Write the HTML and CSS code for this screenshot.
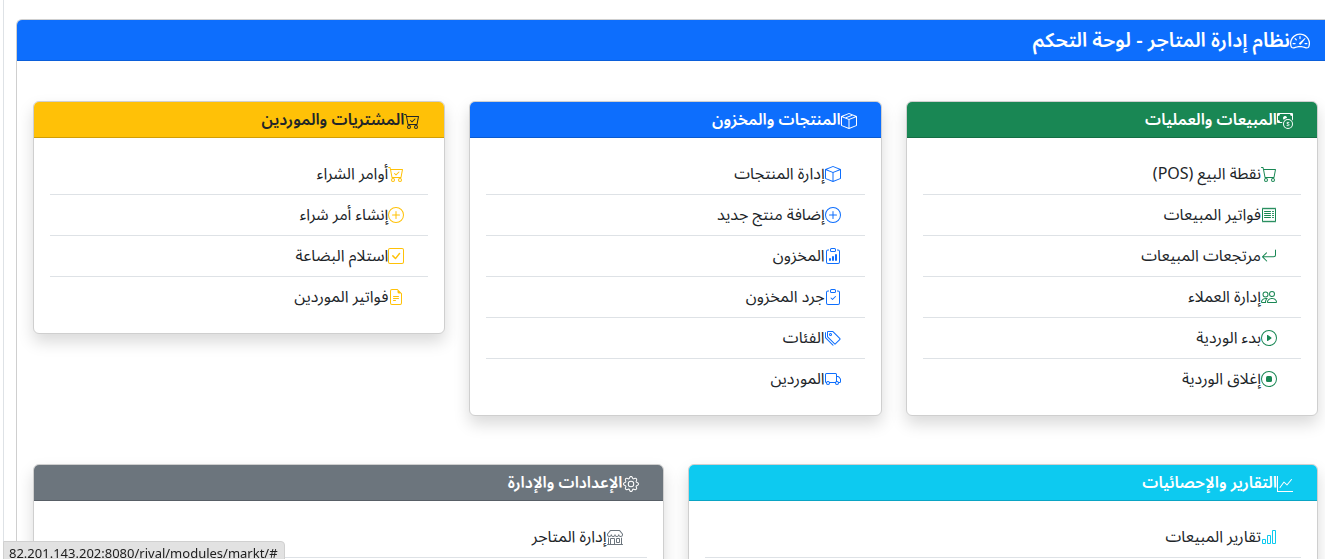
FILE: index.html
```html
<!DOCTYPE html>
<html lang="ar" dir="rtl">
<head>
  <meta charset="UTF-8" />
  <meta name="viewport" content="width=device-width, initial-scale=1.0" />
  <title>نظام إدارة المتاجر - لوحة التحكم</title>
  <link rel="stylesheet" href="styles.css">
</head>
<body>

  <!-- Icons -->
  <svg class="icon-sprite" aria-hidden="true">
    <symbol id="speedometer" viewBox="0 0 16 16">
      <path d="M8 4a.5.5 0 0 1 .5.5V6a.5.5 0 0 1-1 0V4.500A.5.5 0 0 1 8 4M3.732 5.732a.5.5 0 0 1 .707 0l.915.914a.5.5 0 1 1-.708.708l-.914-.915a.5.5 0 0 1 0-.707M2 10a.5.5 0 0 1 .5-.5h1.586a.5.5 0 0 1 0 1H2.500A.5.5 0 0 1 2 10m9.500 0a.5.5 0 0 1 .5-.5h1.500a.5.5 0 0 1 0 1H12a.5.5 0 0 1-.5-.5m.754-4.246a.389.389 0 0 0-.527-.02L7.547 9.310a.910.910 0 1 0 1.302 1.258l3.434-4.297a.389.389 0 0 0-.029-.518z"/>
      <path fill-rule="evenodd" d="M0 10a8 8 0 1 1 15.547 2.661c-.442 1.253-1.845 1.602-2.932 1.250C11.309 13.488 9.475 13 8 13c-1.474 0-3.310.488-4.615.911-1.087.352-2.490.003-2.932-1.250A8 8 0 0 1 0 10m8-7a7 7 0 0 0-6.603 9.329c.203.575.923.876 1.680.630C4.397 12.533 6.358 12 8 12s3.604.532 4.923.960c.757.245 1.477-.056 1.680-.631A7 7 0 0 0 8 3"/>
    </symbol>
    <symbol id="cash-coin" viewBox="0 0 16 16">
      <path fill-rule="evenodd" d="M11 15a4 4 0 1 0 0-8 4 4 0 0 0 0 8m5-4a5 5 0 1 1-10 0 5 5 0 0 1 10 0"/>
      <path d="M9.438 11.944c.047.596.518 1.060 1.363 1.116v.440h.375v-.443c.875-.061 1.386-.529 1.386-1.207 0-.618-.39-.936-1.090-1.100l-.296-.07v-1.200c.376.043.614.248.671.532h.658c-.047-.575-.54-1.024-1.329-1.073V8.500h-.375v.45c-.747.073-1.255.522-1.255 1.158 0 .562.378.920 1.007 1.066l.248.061v1.272c-.384-.058-.639-.27-.696-.563h-.668zm1.360-1.354c-.369-.085-.569-.26-.569-.522 0-.294.216-.514.572-.578v1.100zm.432.746c.449.104.655.272.655.569 0 .339-.257.571-.709.614v-1.195z"/>
      <path d="M1 0a1 1 0 0 0-1 1v8a1 1 0 0 0 1 1h4.083q.088-.517.258-1H3a2 2 0 0 0-2-2V3a2 2 0 0 0 2-2h10a2 2 0 0 0 2 2v3.528c.38.340.717.728 1 1.154V1a1 1 0 0 0-1-1z"/>
      <path d="M9.998 5.083 10 5a2 2 0 1 0-3.132 1.650 6 6 0 0 1 3.130-1.567"/>
    </symbol>
    <symbol id="cart" viewBox="0 0 16 16">
      <path d="M0 1.500A.5.5 0 0 1 .5 1H2a.5.5 0 0 1 .485.379L2.890 3H14.500a.5.5 0 0 1 .491.592l-1.500 8A.5.5 0 0 1 13 12H4a.5.5 0 0 1-.491-.408L2.010 3.607 1.610 2H.5a.5.5 0 0 1-.5-.5M3.102 4l1.313 7h8.170l1.313-7zM5 12a2 2 0 1 0 0 4 2 2 0 0 0 0-4m7 0a2 2 0 1 0 0 4 2 2 0 0 0 0-4m-7 1a1 1 0 1 1 0 2 1 1 0 0 1 0-2m7 0a1 1 0 1 1 0 2 1 1 0 0 1 0-2"/>
    </symbol>
    <symbol id="cart-check" viewBox="0 0 16 16">
      <path d="M11.354 6.354a.5.5 0 0 0-.708-.708L8 8.293 6.854 7.146a.5.5 0 1 0-.708.708l1.500 1.500a.5.5 0 0 0 .708 0z"/>
      <path d="M.5 1a.5.5 0 0 0 0 1h1.110l.401 1.607 1.498 7.985A.5.5 0 0 0 4 12h1a2 2 0 1 0 0 4 2 2 0 0 0 0-4h7a2 2 0 1 0 0 4 2 2 0 0 0 0-4h1a.5.5 0 0 0 .491-.408l1.500-8A.5.5 0 0 0 14.500 3H2.890l-.405-1.621A.5.5 0 0 0 2 1zm3.915 10L3.102 4h10.796l-1.313 7zM6 14a1 1 0 1 1-2 0 1 1 0 0 1 2 0m7 0a1 1 0 1 1-2 0 1 1 0 0 1 2 0"/>
    </symbol>
    <symbol id="receipt" viewBox="0 0 16 16">
      <path d="M1.920.506a.5.5 0 0 1 .434.140L3 1.293l.646-.647a.5.5 0 0 1 .708 0L5 1.293l.646-.647a.5.5 0 0 1 .708 0L7 1.293l.646-.647a.5.5 0 0 1 .708 0L9 1.293l.646-.647a.5.5 0 0 1 .708 0l.646.647.646-.647a.5.5 0 0 1 .708 0l.646.647.646-.647a.5.5 0 0 1 .801.130l.5 1A.5.5 0 0 1 15 2v12a.5.5 0 0 1-.053.224l-.5 1a.5.5 0 0 1-.8.130L13 14.707l-.646.647a.5.5 0 0 1-.708 0L11 14.707l-.646.647a.5.5 0 0 1-.708 0L9 14.707l-.646.647a.5.5 0 0 1-.708 0L7 14.707l-.646.647a.5.5 0 0 1-.708 0L5 14.707l-.646.647a.5.5 0 0 1-.708 0L3 14.707l-.646.647a.5.5 0 0 1-.801-.130l-.5-1A.5.5 0 0 1 1 14V2a.5.5 0 0 1 .053-.224l.5-1a.5.5 0 0 1 .367-.270m.217 1.338L2 2.118v11.764l.137.274.51-.510a.5.5 0 0 1 .707 0l.646.647.646-.646a.5.5 0 0 1 .708 0l.646.646.646-.646a.5.5 0 0 1 .708 0l.646.646.646-.646a.5.5 0 0 1 .708 0l.646.646.646-.646a.5.5 0 0 1 .708 0l.646.646.646-.646a.5.5 0 0 1 .708 0l.509.509.137-.274V2.118l-.137-.274-.51.510a.5.5 0 0 1-.707 0L12 1.707l-.646.647a.5.5 0 0 1-.708 0L10 1.707l-.646.647a.5.5 0 0 1-.708 0L8 1.707l-.646.647a.5.5 0 0 1-.708 0L6 1.707l-.646.647a.5.5 0 0 1-.708 0L4 1.707l-.646.647a.5.5 0 0 1-.708 0z"/>
      <path d="M3 4.500a.5.5 0 0 1 .5-.5h6a.5.5 0 1 1 0 1h-6a.5.5 0 0 1-.5-.5m0 2a.5.5 0 0 1 .5-.5h6a.5.5 0 1 1 0 1h-6a.5.5 0 0 1-.5-.5m0 2a.5.5 0 0 1 .5-.5h6a.5.5 0 1 1 0 1h-6a.5.5 0 0 1-.5-.5m0 2a.5.5 0 0 1 .5-.5h6a.5.5 0 0 1 0 1h-6a.5.5 0 0 1-.5-.5m8-6a.5.5 0 0 1 .5-.5h1a.5.5 0 0 1 0 1h-1a.5.5 0 0 1-.5-.5m0 2a.5.5 0 0 1 .5-.5h1a.5.5 0 0 1 0 1h-1a.5.5 0 0 1-.5-.5m0 2a.5.5 0 0 1 .5-.5h1a.5.5 0 0 1 0 1h-1a.5.5 0 0 1-.5-.5m0 2a.5.5 0 0 1 .5-.5h1a.5.5 0 0 1 0 1h-1a.5.5 0 0 1-.5-.5"/>
    </symbol>
    <symbol id="arrow-return" viewBox="0 0 16 16">
      <path fill-rule="evenodd" d="M14.500 1.500a.5.5 0 0 1 .5.5v4.800a2.500 2.500 0 0 1-2.500 2.500H2.707l3.347 3.346a.5.5 0 0 1-.708.708l-4.200-4.200a.5.5 0 0 1 0-.708l4-4a.5.5 0 1 1 .708.708L2.707 8.300H12.500A1.500 1.500 0 0 0 14 6.800V2a.5.5 0 0 1 .5-.5"/>
    </symbol>
    <symbol id="people" viewBox="0 0 16 16">
      <path d="M15 14s1 0 1-1-1-4-5-4-5 3-5 4 1 1 1 1zm-7.978-1L7 12.996c.001-.264.167-1.030.760-1.720C8.312 10.629 9.282 10 11 10c1.717 0 2.687.630 3.240 1.276.593.690.758 1.457.760 1.720l-.008.002-.014.002zM11 7a2 2 0 1 0 0-4 2 2 0 0 0 0 4m3-2a3 3 0 1 1-6 0 3 3 0 0 1 6 0M6.936 9.280a6 6 0 0 0-1.230-.247A7 7 0 0 0 5 9c-4 0-5 3-5 4q0 1 1 1h4.216A2.240 2.240 0 0 1 5 13c0-1.010.377-2.042 1.090-2.904.243-.294.526-.569.846-.816M4.920 10A5.500 5.500 0 0 0 4 13H1c0-.26.164-1.030.760-1.724.545-.636 1.492-1.256 3.160-1.275ZM1.500 5.500a3 3 0 1 1 6 0 3 3 0 0 1-6 0m3-2a2 2 0 1 0 0 4 2 2 0 0 0 0-4"/>
    </symbol>
    <symbol id="play-circle" viewBox="0 0 16 16">
      <path d="M8 15A7 7 0 1 1 8 1a7 7 0 0 1 0 14m0 1A8 8 0 1 0 8 0a8 8 0 0 0 0 16"/>
      <path d="M6.271 5.055a.5.5 0 0 1 .52.038l3.500 2.500a.5.5 0 0 1 0 .814l-3.500 2.500A.5.5 0 0 1 6 10.500v-5a.5.5 0 0 1 .271-.445"/>
    </symbol>
    <symbol id="stop-circle" viewBox="0 0 16 16">
      <path d="M8 15A7 7 0 1 1 8 1a7 7 0 0 1 0 14m0 1A8 8 0 1 0 8 0a8 8 0 0 0 0 16"/>
      <path d="M5 6.500A1.500 1.500 0 0 1 6.500 5h3A1.500 1.500 0 0 1 11 6.500v3A1.500 1.500 0 0 1 9.500 11h-3A1.500 1.500 0 0 1 5 9.500z"/>
    </symbol>
    <symbol id="plus-circle" viewBox="0 0 16 16">
      <path d="M8 15A7 7 0 1 1 8 1a7 7 0 0 1 0 14m0 1A8 8 0 1 0 8 0a8 8 0 0 0 0 16"/>
      <path d="M8 4a.5.5 0 0 1 .5.5v3h3a.5.5 0 0 1 0 1h-3v3a.5.5 0 0 1-1 0v-3h-3a.5.5 0 0 1 0-1h3v-3A.5.5 0 0 1 8 4"/>
    </symbol>
    <symbol id="box-seam" viewBox="0 0 16 16">
      <path d="M8.186 1.113a.5.5 0 0 0-.372 0L1.846 3.500l2.404.961L10.404 2zm3.564 1.426L5.596 5 8 5.961 14.154 3.500zm3.250 1.700-6.500 2.600v7.922l6.500-2.600V4.240zM7.500 14.762V6.838L1 4.239v7.923zM7.443.184a1.500 1.500 0 0 1 1.114 0l7.129 2.852A.5.5 0 0 1 16 3.500v8.662a1 1 0 0 1-.629.928l-7.185 2.874a.5.5 0 0 1-.372 0L.630 13.090a1 1 0 0 1-.630-.928V3.500a.5.5 0 0 1 .314-.464z"/>
    </symbol>
    <symbol id="box" viewBox="0 0 16 16">
      <path d="M8.186 1.113a.5.5 0 0 0-.372 0L1.846 3.500 8 5.961 14.154 3.500zM15 4.239l-6.500 2.600v7.922l6.500-2.600V4.240zM7.500 14.762V6.838L1 4.239v7.923zM7.443.184a1.500 1.500 0 0 1 1.114 0l7.129 2.852A.5.5 0 0 1 16 3.500v8.662a1 1 0 0 1-.629.928l-7.185 2.874a.5.5 0 0 1-.372 0L.630 13.090a1 1 0 0 1-.630-.928V3.500a.5.5 0 0 1 .314-.464z"/>
    </symbol>
    <symbol id="clipboard-data" viewBox="0 0 16 16">
      <path d="M4 11a1 1 0 1 1 2 0v1a1 1 0 1 1-2 0zm6-4a1 1 0 1 1 2 0v5a1 1 0 1 1-2 0zM7 9a1 1 0 0 1 2 0v3a1 1 0 1 1-2 0z"/>
      <path d="M4 1.500H3a2 2 0 0 0-2 2V14a2 2 0 0 0 2 2h10a2 2 0 0 0 2-2V3.500a2 2 0 0 0-2-2h-1v1h1a1 1 0 0 1 1 1V14a1 1 0 0 1-1 1H3a1 1 0 0 1-1-1V3.500a1 1 0 0 1 1-1h1z"/>
      <path d="M9.500 1a.5.5 0 0 1 .5.5v1a.5.5 0 0 1-.5.5h-3a.5.5 0 0 1-.5-.5v-1a.5.5 0 0 1 .5-.5zm-3-1A1.500 1.500 0 0 0 5 1.500v1A1.500 1.500 0 0 0 6.500 4h3A1.500 1.500 0 0 0 11 2.500v-1A1.500 1.500 0 0 0 9.500 0z"/>
    </symbol>
    <symbol id="clipboard-check" viewBox="0 0 16 16">
      <path fill-rule="evenodd" d="M10.854 7.146a.5.5 0 0 1 0 .708l-3 3a.5.5 0 0 1-.708 0l-1.500-1.500a.5.5 0 1 1 .708-.708L7.500 9.793l2.646-2.647a.5.5 0 0 1 .708 0"/>
      <path d="M4 1.500H3a2 2 0 0 0-2 2V14a2 2 0 0 0 2 2h10a2 2 0 0 0 2-2V3.500a2 2 0 0 0-2-2h-1v1h1a1 1 0 0 1 1 1V14a1 1 0 0 1-1 1H3a1 1 0 0 1-1-1V3.500a1 1 0 0 1 1-1h1z"/>
      <path d="M9.500 1a.5.5 0 0 1 .5.5v1a.5.5 0 0 1-.5.5h-3a.5.5 0 0 1-.5-.5v-1a.5.5 0 0 1 .5-.5zm-3-1A1.500 1.500 0 0 0 5 1.500v1A1.500 1.500 0 0 0 6.500 4h3A1.500 1.500 0 0 0 11 2.500v-1A1.500 1.500 0 0 0 9.500 0z"/>
    </symbol>
    <symbol id="tags" viewBox="0 0 16 16">
      <path d="M3 2v4.586l7 7L14.586 9l-7-7zM2 2a1 1 0 0 1 1-1h4.586a1 1 0 0 1 .707.293l7 7a1 1 0 0 1 0 1.414l-4.586 4.586a1 1 0 0 1-1.414 0l-7-7A1 1 0 0 1 2 6.586z"/>
      <path d="M5.500 5a.5.5 0 1 1 0-1 .5.5 0 0 1 0 1m0 1a1.500 1.500 0 1 0 0-3 1.500 1.500 0 0 0 0 3M1 7.086a1 1 0 0 0 .293.707L8.750 15.250l-.043.043a1 1 0 0 1-1.414 0l-7-7A1 1 0 0 1 0 7.586V3a1 1 0 0 1 1-1z"/>
    </symbol>
    <symbol id="truck" viewBox="0 0 16 16">
      <path d="M0 3.500A1.500 1.500 0 0 1 1.500 2h9A1.500 1.500 0 0 1 12 3.500V5h1.020a1.500 1.500 0 0 1 1.170.563l1.481 1.850a1.500 1.500 0 0 1 .329.938V10.500a1.500 1.500 0 0 1-1.500 1.500H14a2 2 0 1 1-4 0H5a2 2 0 1 1-3.998-.085A1.500 1.500 0 0 1 0 10.500zm1.294 7.456A2 2 0 0 1 4.732 11h5.536a2 2 0 0 1 .732-.732V3.500a.5.5 0 0 0-.5-.5h-9a.5.5 0 0 0-.5.5v7a.5.5 0 0 0 .294.456M12 10a2 2 0 0 1 1.732 1h.768a.5.5 0 0 0 .5-.5V8.350a.5.5 0 0 0-.110-.312l-1.480-1.850A.5.5 0 0 0 13.020 6H12zm-9 1a1 1 0 1 0 0 2 1 1 0 0 0 0-2m9 0a1 1 0 1 0 0 2 1 1 0 0 0 0-2"/>
    </symbol>
    <symbol id="check-square" viewBox="0 0 16 16">
      <path d="M14 1a1 1 0 0 1 1 1v12a1 1 0 0 1-1 1H2a1 1 0 0 1-1-1V2a1 1 0 0 1 1-1zM2 0a2 2 0 0 0-2 2v12a2 2 0 0 0 2 2h12a2 2 0 0 0 2-2V2a2 2 0 0 0-2-2z"/>
      <path d="M10.970 4.970a.750.750 0 0 1 1.071 1.050l-3.992 4.990a.750.750 0 0 1-1.080.020L4.324 8.384a.750.750 0 1 1 1.060-1.060l2.094 2.093 3.473-4.425z"/>
    </symbol>
    <symbol id="file-text" viewBox="0 0 16 16">
      <path d="M5.500 7a.5.5 0 0 0 0 1h5a.5.5 0 0 0 0-1zM5 9.500a.5.5 0 0 1 .5-.5h5a.5.5 0 0 1 0 1h-5a.5.5 0 0 1-.5-.5m0 2a.5.5 0 0 1 .5-.5h2a.5.5 0 0 1 0 1h-2a.5.5 0 0 1-.5-.5"/>
      <path d="M9.500 0H4a2 2 0 0 0-2 2v12a2 2 0 0 0 2 2h8a2 2 0 0 0 2-2V4.500zm0 1v2A1.500 1.500 0 0 0 11 4.500h2V14a1 1 0 0 1-1 1H4a1 1 0 0 1-1-1V2a1 1 0 0 1 1-1z"/>
    </symbol>
    <symbol id="graph-up" viewBox="0 0 16 16">
      <path fill-rule="evenodd" d="M0 0h1v15h15v1H0zm14.817 3.113a.5.5 0 0 1 .070.704l-4.500 5.500a.5.5 0 0 1-.740.037L7.060 6.767l-3.656 5.027a.5.5 0 0 1-.808-.588l4-5.500a.5.5 0 0 1 .758-.060l2.609 2.610 4.150-5.073a.5.5 0 0 1 .704-.070"/>
    </symbol>
    <symbol id="bar-chart" viewBox="0 0 16 16">
      <path d="M4 11H2v3h2zm5-4H7v7h2zm5-5v12h-2V2zm-2-1a1 1 0 0 0-1 1v12a1 1 0 0 0 1 1h2a1 1 0 0 0 1-1V2a1 1 0 0 0-1-1zM6 7a1 1 0 0 1 1-1h2a1 1 0 0 1 1 1v7a1 1 0 0 1-1 1H7a1 1 0 0 1-1-1zm-5 4a1 1 0 0 1 1-1h2a1 1 0 0 1 1 1v3a1 1 0 0 1-1 1H2a1 1 0 0 1-1-1z"/>
    </symbol>
    <symbol id="gear" viewBox="0 0 16 16">
      <path d="M8 4.754a3.246 3.246 0 1 0 0 6.492 3.246 3.246 0 0 0 0-6.492M5.754 8a2.246 2.246 0 1 1 4.492 0 2.246 2.246 0 0 1-4.492 0"/>
      <path d="M9.796 1.343c-.527-1.790-3.065-1.790-3.592 0l-.094.319a.873.873 0 0 1-1.255.520l-.292-.160c-1.640-.892-3.433.902-2.540 2.541l.159.292a.873.873 0 0 1-.520 1.255l-.319.094c-1.790.527-1.790 3.065 0 3.592l.319.094a.873.873 0 0 1 .520 1.255l-.160.292c-.892 1.640.901 3.434 2.541 2.540l.292-.159a.873.873 0 0 1 1.255.520l.094.319c.527 1.790 3.065 1.790 3.592 0l.094-.319a.873.873 0 0 1 1.255-.520l.292.160c1.640.893 3.434-.902 2.540-2.541l-.159-.292a.873.873 0 0 1 .520-1.255l.319-.094c1.790-.527 1.790-3.065 0-3.592l-.319-.094a.873.873 0 0 1-.520-1.255l.160-.292c.893-1.640-.902-3.433-2.541-2.540l-.292.159a.873.873 0 0 1-1.255-.520zm-2.633.283c.246-.835 1.428-.835 1.674 0l.094.319a1.873 1.873 0 0 0 2.693 1.115l.291-.160c.764-.415 1.600.420 1.184 1.185l-.159.292a1.873 1.873 0 0 0 1.116 2.692l.318.094c.835.246.835 1.428 0 1.674l-.319.094a1.873 1.873 0 0 0-1.115 2.693l.160.291c.415.764-.420 1.600-1.185 1.184l-.291-.159a1.873 1.873 0 0 0-2.693 1.116l-.094.318c-.246.835-1.428.835-1.674 0l-.094-.319a1.873 1.873 0 0 0-2.692-1.115l-.292.160c-.764.415-1.600-.420-1.184-1.185l.159-.291A1.873 1.873 0 0 0 1.945 8.930l-.319-.094c-.835-.246-.835-1.428 0-1.674l.319-.094A1.873 1.873 0 0 0 3.060 4.377l-.160-.292c-.415-.764.420-1.600 1.185-1.184l.292.159a1.873 1.873 0 0 0 2.692-1.115z"/>
    </symbol>
    <symbol id="shop" viewBox="0 0 16 16">
      <path d="M2.970 1.350A1 1 0 0 1 3.730 1h8.540a1 1 0 0 1 .760.350l2.609 3.044A1.500 1.500 0 0 1 16 5.370v.255a2.375 2.375 0 0 1-4.250 1.458A2.370 2.370 0 0 1 9.875 8 2.370 2.370 0 0 1 8 7.083 2.370 2.370 0 0 1 6.125 8a2.370 2.370 0 0 1-1.875-.917A2.375 2.375 0 0 1 0 5.625V5.370a1.500 1.500 0 0 1 .361-.976zm1.780 4.275a1.375 1.375 0 0 0 2.750 0 .5.5 0 0 1 1 0 1.375 1.375 0 0 0 2.750 0 .5.5 0 0 1 1 0 1.375 1.375 0 1 0 2.750 0V5.370a.5.5 0 0 0-.120-.325L12.270 2H3.730L1.120 5.045A.5.5 0 0 0 1 5.370v.255a1.375 1.375 0 0 0 2.750 0 .5.5 0 0 1 1 0M1.500 8.500A.5.5 0 0 1 2 9v6h1v-5a1 1 0 0 1 1-1h3a1 1 0 0 1 1 1v5h6V9a.5.5 0 0 1 1 0v6h.5a.5.5 0 0 1 0 1H.5a.5.5 0 0 1 0-1H1V9a.5.5 0 0 1 .5-.5M4 15h3v-5H4zm5-5a1 1 0 0 1 1-1h2a1 1 0 0 1 1 1v3a1 1 0 0 1-1 1h-2a1 1 0 0 1-1-1zm3 0h-2v3h2z"/>
    </symbol>
  </svg>

  <main class="page">
    <section class="dashboard">
      <header class="dashboard-header">
        <h1><svg class="icon"><use href="#speedometer"/></svg>نظام إدارة المتاجر - لوحة التحكم</h1>
      </header>

      <div class="dashboard-body">
        <div class="row row-three">
          <!-- Sales -->
          <section class="card sales">
            <h2><svg class="icon"><use href="#cash-coin"/></svg>المبيعات والعمليات</h2>
            <nav class="links">
              <a href="#"><svg class="icon"><use href="#cart"/></svg>نقطة البيع (POS)</a>
              <a href="#"><svg class="icon"><use href="#receipt"/></svg>فواتير المبيعات</a>
              <a href="#"><svg class="icon"><use href="#arrow-return"/></svg>مرتجعات المبيعات</a>
              <a href="#"><svg class="icon"><use href="#people"/></svg>إدارة العملاء</a>
              <a href="#"><svg class="icon"><use href="#play-circle"/></svg>بدء الوردية</a>
              <a href="#"><svg class="icon"><use href="#stop-circle"/></svg>إغلاق الوردية</a>
            </nav>
          </section>

          <!-- Products -->
          <section class="card products">
            <h2><svg class="icon"><use href="#box-seam"/></svg>المنتجات والمخزون</h2>
            <nav class="links">
              <a href="#"><svg class="icon"><use href="#box"/></svg>إدارة المنتجات</a>
              <a href="#"><svg class="icon"><use href="#plus-circle"/></svg>إضافة منتج جديد</a>
              <a href="#"><svg class="icon"><use href="#clipboard-data"/></svg>المخزون</a>
              <a href="#"><svg class="icon"><use href="#clipboard-check"/></svg>جرد المخزون</a>
              <a href="#"><svg class="icon"><use href="#tags"/></svg>الفئات</a>
              <a href="#"><svg class="icon"><use href="#truck"/></svg>الموردين</a>
            </nav>
          </section>

          <!-- Purchases -->
          <section class="card purchases">
            <h2><svg class="icon"><use href="#cart-check"/></svg>المشتريات والموردين</h2>
            <nav class="links">
              <a href="#"><svg class="icon"><use href="#cart-check"/></svg>أوامر الشراء</a>
              <a href="#"><svg class="icon"><use href="#plus-circle"/></svg>إنشاء أمر شراء</a>
              <a href="#"><svg class="icon"><use href="#check-square"/></svg>استلام البضاعة</a>
              <a href="#"><svg class="icon"><use href="#file-text"/></svg>فواتير الموردين</a>
            </nav>
          </section>
        </div>

        <div class="row row-two">
          <!-- Reports -->
          <section class="card reports">
            <h2><svg class="icon"><use href="#graph-up"/></svg>التقارير والإحصائيات</h2>
            <nav class="links">
              <a href="#"><svg class="icon"><use href="#bar-chart"/></svg>تقارير المبيعات</a>
            </nav>
          </section>

          <!-- Settings -->
          <section class="card settings">
            <h2><svg class="icon"><use href="#gear"/></svg>الإعدادات والإدارة</h2>
            <nav class="links">
              <a href="#"><svg class="icon"><use href="#shop"/></svg>إدارة المتاجر</a>
            </nav>
          </section>
        </div>
      </div>
    </section>
  </main>

  <div class="status-bar" dir="ltr">82.201.143.202:8080/rival/modules/markt/#</div>

</body>
</html>
```

FILE: styles.css
```css
* {
  box-sizing: border-box;
}

body {
  margin: 0;
  height: 100vh;
  overflow: hidden;
  background-color: #fff;
  color: #212529;
  font-family: "Segoe UI", "Noto Sans Arabic", "Noto Sans", "DejaVu Sans", sans-serif;
  font-size: 16px;
  line-height: 24px;
}

.icon-sprite {
  display: none;
}

.icon {
  flex: none;
  width: 16px;
  height: 16px;
  margin-right: 8px;
  fill: currentColor;
}

.page {
  min-height: 100vh;
  margin-left: 3px;
  padding: 19px 0 0 12px;
  border-left: 1px solid #dee2e6;
}

.dashboard {
  border: 1px solid #cfcfcf;
  border-right: none;
  border-radius: 6px 0 0 6px;
}

.dashboard-header {
  padding: 9px 7px 7px 16px;
  background-color: #0d6efd;
  border-bottom: 1px solid #0b5fda;
  border-radius: 5px 0 0 0;
  color: #fff;
}

.dashboard-header h1 {
  display: flex;
  align-items: center;
  margin: 0;
  font-size: 20px;
  font-weight: 600;
  line-height: 24px;
}

.dashboard-header .icon {
  width: 20px;
  height: 20px;
}

.dashboard-body {
  padding: 40px 7px 16px 16px;
}

/* Cards */
.row {
  display: grid;
  gap: 24px;
  align-items: start;
  margin-bottom: 48px;
}

.row-three {
  grid-template-columns: repeat(3, 1fr);
}

.row-two {
  grid-template-columns: repeat(2, 1fr);
}

.card {
  border: 1px solid #cfcfcf;
  border-radius: 6px;
  background-color: #fff;
  box-shadow: 0 8px 16px rgba(0, 0, 0, 0.15);
}

.card h2 {
  display: flex;
  align-items: center;
  margin: 0;
  padding: 9px 16px 7px;
  border-bottom: 1px solid rgba(0, 0, 0, 0.18);
  border-radius: 5px 5px 0 0;
  color: #fff;
  font-size: 16px;
  font-weight: 600;
  line-height: 19px;
}

.sales h2 {
  background-color: #198754;
}

.products h2 {
  background-color: #0d6efd;
}

.purchases h2 {
  background-color: #ffc107;
  color: #212529;
}

.reports h2 {
  background-color: #0dcaf0;
}

.settings h2 {
  background-color: #6c757d;
}

.links {
  padding: 16px;
}

.links a {
  display: flex;
  align-items: center;
  padding: 8px 16px;
  border-bottom: 1px solid #dee2e6;
  color: #212529;
  text-decoration: none;
}

.row-three .links a:last-child {
  border-bottom: none;
}

.sales .links .icon {
  color: #198754;
}

.products .links .icon {
  color: #0d6efd;
}

.purchases .links .icon {
  color: #ffc107;
}

.reports .links .icon {
  color: #0dcaf0;
}

.settings .links .icon {
  color: #6c757d;
}

/* Link address shown in the bottom corner */
.status-bar {
  position: fixed;
  left: 3px;
  bottom: -7px;
  padding: 1px 6px 0 5px;
  border: 1px solid #d0d0d0;
  border-radius: 0 4px 0 0;
  background-color: #e2e2e2;
  color: #202020;
  font-size: 13px;
  line-height: 22px;
}
```
